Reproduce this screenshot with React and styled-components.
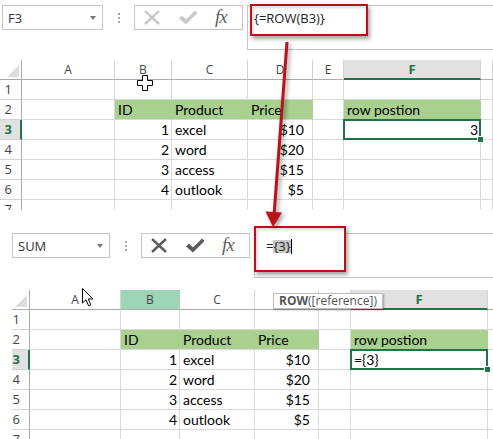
import React from 'react';
import styled, { createGlobalStyle, css } from 'styled-components';

const GREEN = '#217346';
const FILL = '#a9d08e';
const GRID = '#d9d9d9';
const HEAD_LINE = '#ababab';
const RED = '#b9121b';

const GlobalStyle = createGlobalStyle`
  html, body {
    margin: 0;
    padding: 0;
    background: #fff;
  }
  body {
    font-family: 'Open Sans', 'Noto Sans', sans-serif;
  }
`;

const Page = styled.div`
  position: relative;
  width: 493px;
  height: 439px;
  overflow: hidden;
  background: #fff;
`;

const Shot = styled.section`
  position: relative;
  height: ${p => p.$h}px;
  padding-left: ${p => p.$x}px;
  box-sizing: border-box;
  overflow: hidden;
`;

const Toolbar = styled.div`
  display: flex;
  align-items: flex-start;
  height: ${p => p.$h}px;
  padding-top: ${p => p.$top}px;
  box-sizing: border-box;
`;

const NameBox = styled.div`
  width: ${p => p.$w}px;
  height: 25px;
  margin-left: 2px;
  box-sizing: border-box;
  border: 1px solid #c6c6c6;
  display: flex;
  align-items: center;
  justify-content: space-between;
  padding: 0 6px 0 5px;
  font: 13px/18px 'Open Sans', sans-serif;
  color: #333;
`;

const Caret = styled.span`
  width: 0;
  height: 0;
  border-left: 3.5px solid transparent;
  border-right: 3.5px solid transparent;
  border-top: 4px solid #7a7a7a;
`;

const Separator = styled.div`
  width: 31px;
  display: flex;
  justify-content: center;
  padding-top: 8px;
  &::before {
    content: '';
    width: 2px;
    height: 10px;
    background: repeating-linear-gradient(#a6a6a6 0 2px, transparent 2px 4px);
  }
`;

const FxButtons = styled.div`
  width: 109px;
  height: 25px;
  box-sizing: border-box;
  border: 1px solid #c6c6c6;
  display: flex;
  align-items: center;
  justify-content: space-between;
  padding: 0 9px 0 8px;
  color: ${p => (p.$disabled ? '#c9c9c9' : '#5c5c5c')};
`;

const Fx = styled.span`
  width: 18px;
  font: italic 19px/20px 'Liberation Serif', serif;
  color: #5f5f5f;
  letter-spacing: -1px;
  margin-top: -2px;
`;

const FormulaBar = styled.div`
  position: relative;
  flex: 1;
  height: 45px;
  margin-left: 4px;
  box-sizing: border-box;
  border: 1px solid #c6c6c6;
  border-right: none;
  padding: 3px 0 0 ${p => p.$indent}px;
`;

const FormulaText = styled.div`
  position: relative;
  z-index: 1;
  font: 13px/18px 'Open Sans', sans-serif;
  color: #222;
  white-space: nowrap;
`;

const Picked = styled.span`
  display: inline-block;
  line-height: 13px;
  background: #c8c8c8;
`;

const TextCursor = styled.span`
  display: inline-block;
  width: 1px;
  height: 15px;
  background: #000;
  vertical-align: -3px;
`;

const Callout = styled.div`
  position: absolute;
  left: ${p => p.$x}px;
  top: ${p => p.$y}px;
  width: ${p => p.$w}px;
  height: ${p => p.$h}px;
  box-sizing: border-box;
  border: 2px solid ${RED};
  background: #fff;
  box-shadow: 2px 3px 4px rgba(0, 0, 0, 0.35), inset 2px 2px 3px rgba(0, 0, 0, 0.15);
`;

const Grid = styled.div`
  display: grid;
  grid-template-columns: ${p => p.$cols};
  grid-auto-rows: 20px;
  margin-left: ${p => p.$inset}px;
`;

const Corner = styled.div`
  box-sizing: border-box;
  border-right: 1px solid ${HEAD_LINE};
  border-bottom: 1px solid ${HEAD_LINE};
  display: flex;
  align-items: flex-end;
  justify-content: flex-end;
  padding: 0 2px 2px 0;
`;

const ColHead = styled.div`
  box-sizing: border-box;
  border-right: 1px solid #d4d4d4;
  border-bottom: 1px solid ${HEAD_LINE};
  background: #fff;
  color: #444;
  font: 12px/19px 'Open Sans', sans-serif;
  text-align: center;
  ${p =>
    p.$state === 'sel' &&
    css`
      background: #e1e1e1;
      border-bottom: 2px solid ${GREEN};
      color: ${GREEN};
      font-weight: 700;
      font-size: 13px;
    `}
  ${p =>
    p.$state === 'ref' &&
    css`
      background: #9fd5b7;
      border-right-color: #9fd5b7;
    `}
`;

const RowHead = styled.div`
  box-sizing: border-box;
  border-right: 1px solid ${HEAD_LINE};
  border-bottom: 1px solid #d4d4d4;
  background: #fff;
  color: #444;
  font: 13px/19px 'Open Sans', sans-serif;
  text-align: right;
  padding-right: 9px;
  ${p =>
    p.$sel &&
    css`
      background: #e1e1e1;
      border-right: 2px solid ${GREEN};
      padding-right: 8px;
      color: ${GREEN};
      font-weight: 700;
    `}
`;

const Cell = styled.div`
  position: relative;
  box-sizing: border-box;
  border-right: 1px solid ${p => (p.$fill ? FILL : GRID)};
  border-bottom: 1px solid ${GRID};
  background: ${p => (p.$fill ? FILL : '#fff')};
  padding: 0 ${p => (p.$acct ? 8 : 2)}px 0 3px;
  font: 14px/19px Lato, sans-serif;
  color: #000;
  text-align: ${p => (p.$right ? 'right' : 'left')};
  white-space: nowrap;
  ${p =>
    p.$sel &&
    css`
      &::after {
        content: '';
        position: absolute;
        top: -1px;
        left: -1px;
        right: -1px;
        bottom: -1px;
        border: 2px solid ${GREEN};
        z-index: 1;
      }
      &::before {
        content: '';
        position: absolute;
        right: -4px;
        bottom: -4px;
        width: 5px;
        height: 5px;
        background: ${GREEN};
        border: 1px solid #fff;
        z-index: 2;
      }
    `}
`;

const Tooltip = styled.div`
  position: absolute;
  left: 273px;
  top: 83px;
  height: 16px;
  box-sizing: border-box;
  padding: 0 5px;
  border: 1px solid #bdbdbd;
  background: #fff;
  box-shadow: 1px 1px 2px rgba(0, 0, 0, 0.3);
  font: 12px/14px 'Open Sans', sans-serif;
  color: #555;
  white-space: nowrap;
  z-index: 3;
  b {
    font-weight: 700;
  }
`;

const Pointer = styled.svg`
  position: absolute;
  left: ${p => p.$x}px;
  top: ${p => p.$y}px;
  z-index: 4;
`;

const Overlay = styled.svg`
  position: absolute;
  left: 0;
  top: 0;
  z-index: 5;
  pointer-events: none;
  filter: drop-shadow(2px 2px 2px rgba(0, 0, 0, 0.4));
`;

const COLS = ['A', 'B', 'C', 'D', 'E', 'F', 'G'];

const rows = [
  { n: 1, v: {} },
  { n: 2, v: { B: 'ID', C: 'Product', D: 'Price', F: 'row postion' }, fill: true },
  { n: 3, v: { B: 1, C: 'excel', D: '$10' } },
  { n: 4, v: { B: 2, C: 'word', D: '$20' } },
  { n: 5, v: { B: 3, C: 'access', D: '$15' } },
  { n: 6, v: { B: 4, C: 'outlook', D: '$5' } },
  { n: 7, v: {} },
];

const CrossIcon = () => (
  <svg width="18" height="15" viewBox="0 0 18 15">
    <path d="M2 1 L16 14 M16 1 L2 14" stroke="currentColor" strokeWidth="2.4" fill="none" />
  </svg>
);

const CheckIcon = () => (
  <svg width="20" height="15" viewBox="0 0 20 15">
    <path d="M1 8.5 L4 5.5 L8 9.5 L17 0.5 L19.5 3 L8 14.5 Z" fill="currentColor" />
  </svg>
);

function FormulaRow({ top, height, nameW, name, disabled, indent, callout, children }) {
  return (
    <Toolbar $top={top} $h={height}>
      <NameBox $w={nameW}>
        {name}
        <Caret />
      </NameBox>
      <Separator />
      <FxButtons $disabled={disabled}>
        <CrossIcon />
        <CheckIcon />
        <Fx>fx</Fx>
      </FxButtons>
      <FormulaBar $indent={indent}>
        <Callout $x={callout.x} $y={callout.y} $w={callout.w} $h={callout.h} />
        <FormulaText>{children}</FormulaText>
      </FormulaBar>
    </Toolbar>
  );
}

// covered: header letters hidden under the function tooltip
function Sheet({ cols, inset, refCol, f3, covered = [] }) {
  return (
    <Grid $cols={cols} $inset={inset}>
      <Corner>
        <svg width="12" height="12" viewBox="0 0 12 12">
          <path d="M12 0 L12 12 L0 12 Z" fill="#dcdcdc" />
        </svg>
      </Corner>
      {COLS.map(c => (
        <ColHead key={c} $state={c === 'F' ? 'sel' : c === refCol ? 'ref' : null}>
          {c === 'G' || covered.includes(c) ? '' : c}
        </ColHead>
      ))}
      {rows.map(r => (
        <React.Fragment key={r.n}>
          <RowHead $sel={r.n === 3}>{r.n}</RowHead>
          {COLS.map(c => {
            const sel = r.n === 3 && c === 'F';
            const value = sel ? f3 : r.v[c];
            const filled = r.fill && ['B', 'C', 'D', 'F'].includes(c);
            const isMoney = typeof value === 'string' && value.startsWith('$');
            return (
              <Cell
                key={c}
                $fill={filled}
                $sel={sel}
                $right={typeof value === 'number' || isMoney}
                $acct={isMoney}
              >
                {value}
              </Cell>
            );
          })}
        </React.Fragment>
      ))}
    </Grid>
  );
}

export default function App() {
  return (
    <Page>
      <GlobalStyle />
      <Shot $h={210} $x={0}>
        <FormulaRow
          top={5}
          height={60}
          nameW={101}
          name="F3"
          disabled
          indent={6}
          callout={{ x: 2, y: -2, w: 118, h: 32 }}
        >
          {'{=ROW(B3)}'}
        </FormulaRow>
        <Sheet cols="22px 93px 57px 76px 65px 31px 137px 1fr" inset={0} f3={3} />
        <Pointer $x={137} $y={75} width="16" height="16" viewBox="0 0 16 16">
          <path
            d="M5.5 0.5 H10.5 V5.5 H15.5 V10.5 H10.5 V15.5 H5.5 V10.5 H0.5 V5.5 H5.5 Z"
            fill="#fff"
            stroke="#000"
          />
        </Pointer>
      </Shot>
      <Shot $h={229} $x={10}>
        <FormulaRow
          top={23}
          height={80}
          nameW={98}
          name="SUM"
          indent={11}
          callout={{ x: -1, y: -8, w: 92, h: 46 }}
        >
          =<Picked>{'{3}'}</Picked>
          <TextCursor />
        </FormulaRow>
        <Sheet
          cols="18px 91px 59px 75px 64px 32px 137px 1fr"
          inset={2}
          refCol="B"
          f3="={3}"
          covered={['D', 'E']}
        />
        <Tooltip>
          <b>ROW</b>([reference])
        </Tooltip>
        <Pointer $x={82} $y={78} width="12" height="19" viewBox="0 0 12 19">
          <path
            d="M0.5 0.5 L0.5 15 L4 11.8 L6.6 17.8 L8.8 16.8 L6.3 11 L11 11 Z"
            fill="#fff"
            stroke="#000"
          />
        </Pointer>
      </Shot>
      <Overlay width="493" height="439" viewBox="0 0 493 439">
        <line x1="287" y1="42" x2="274.2" y2="213" stroke={RED} strokeWidth="3" />
        <path d="M265.5 211.5 L282 212.5 L273 227 Z" fill={RED} />
      </Overlay>
    </Page>
  );
}
